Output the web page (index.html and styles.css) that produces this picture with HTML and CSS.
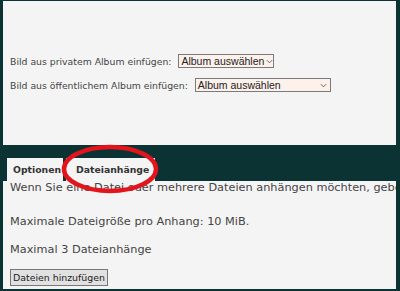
FILE: index.html
```html
<!DOCTYPE html>
<html lang="de">
<head>
    <meta charset="UTF-8">
    <title>Beitrag schreiben</title>
    <link rel="stylesheet" href="styles.css">
</head>
<body>

    <!-- Bilder aus Alben -->
    <div class="panel album-panel">
        <div class="album-row">
            <label>Bild aus privatem Album einfügen:</label>
            <span class="fake-select select-short">Album auswählen <svg class="chevron" viewBox="0 0 8 5" width="7" height="5"><path d="M1 1 L4 4 L7 1" fill="none" stroke="#555" stroke-width="1"/></svg></span>
        </div>
        <div class="album-row">
            <label>Bild aus öffentlichem Album einfügen:</label>
            <span class="fake-select select-long">Album auswählen <svg class="chevron" viewBox="0 0 8 5" width="7" height="5"><path d="M1 1 L4 4 L7 1" fill="none" stroke="#555" stroke-width="1"/></svg></span>
        </div>
    </div>

    <!-- Reiter -->
    <div class="tabs">
        <div class="tab tab-options">Optionen</div>
        <div class="tab tab-files active">Dateianhänge</div>
        <svg class="marker" width="104" height="54" viewBox="0 0 104 54">
            <ellipse cx="52" cy="27" rx="46" ry="22" fill="none" stroke="#e3141c" stroke-width="4.5"/>
        </svg>
    </div>

    <div class="panel attach-panel">
        <p class="intro">Wenn Sie eine Datei oder mehrere Dateien anhängen möchten, geben Sie unten die Details ein.</p>
        <p>Maximale Dateigröße pro Anhang: 10 MiB.</p>
        <p>Maximal 3 Dateianhänge</p>
        <button class="add-button">Dateien hinzufügen</button>
    </div>

</body>
</html>
```

FILE: styles.css
```css
body {
    background-color: #0c3333; /* dunkles Petrol */
    color: #333;
    font-family: "DejaVu Sans", Verdana, sans-serif;
    margin: 0;
    padding: 1px 4px 2px 3px;
    overflow: hidden;
}

.panel {
    background-color: #f4f4f4;
}

.album-panel {
    height: 144px;
    padding: 53px 7px 0 7px;
    box-sizing: border-box;
}

.album-row {
    display: flex;
    align-items: center;
    gap: 7px;
    margin-bottom: 10px;
    font-size: 9.3px;
    color: #444;
    white-space: nowrap;
}

.fake-select {
    display: flex;
    align-items: center;
    justify-content: space-between;
    flex-shrink: 0;
    height: 14px;
    box-sizing: border-box;
    padding: 0 3px 0 2px;
    border: 1px solid #7a7a7a;
    background-color: #fdf1ec;
    font-family: "Liberation Sans", Arial, sans-serif;
    font-size: 10.5px;
    color: #222;
    white-space: nowrap;
    overflow: hidden;
}

.select-short {
    width: 96px;
}

.select-long {
    width: 136px;
}

.chevron {
    flex-shrink: 0;
    margin-left: 2px;
}

.tabs {
    position: relative;
    display: flex;
    gap: 3px;
    padding: 13px 0 0 4px;
}

.tab {
    background-color: #f4f4f4;
    height: 23px;
    box-sizing: border-box;
    display: flex;
    align-items: center;
    font-size: 9.3px;
    font-weight: bold;
    color: #333;
}

.tab-options {
    width: 56px;
    padding-left: 6px;
}

.tab-files {
    width: 89px;
    padding-left: 10px;
}

.marker {
    position: absolute;
    left: 55px;
    top: -3px;
}

.attach-panel {
    height: 108px;
    padding: 0 7px;
    white-space: nowrap;
    overflow: hidden;
    font-size: 11.3px;
    color: #444;
}

.attach-panel p {
    margin: 0 0 14px 0;
    line-height: 13px;
}

.attach-panel .intro {
    margin-bottom: 21px;
}

.attach-panel p + p {
    margin-bottom: 15px;
}

.add-button {
    font-family: "DejaVu Sans", Verdana, sans-serif;
    font-size: 9.4px;
    color: #222;
    background-color: #e1e1e1;
    border: 1px solid #777;
    padding: 1px 2px;
    height: 17px;
    margin-top: -5px;
}
```
